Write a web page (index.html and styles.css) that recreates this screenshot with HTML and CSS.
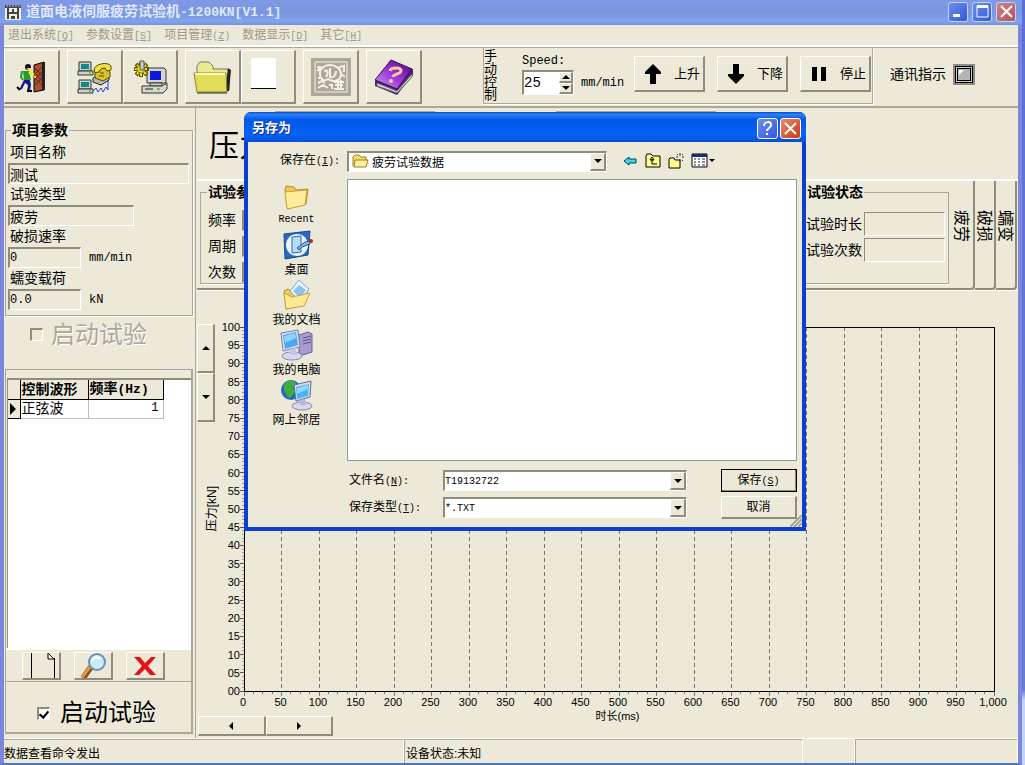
FILE: index.html
```html
<!DOCTYPE html>
<html lang="zh-CN">
<head>
  <meta charset="utf-8">
  <meta name="viewport" content="width=device-width, initial-scale=1.0">
  <title>道面电液伺服疲劳试验机</title>
  <link rel="stylesheet" href="styles.css">
</head>
<body>
  <div class="window">
    <header class="titlebar">
      <svg width="18" height="18" viewBox="0 0 18 18"><path d="M1 2h16v15H1z" fill="#eee"/><path d="M1 2h16v3H1zM3 5h2v11H3zM13 5h2v11h-2zM8 6h2v3H8zM5 9h8v2H5zM7 13h4v3H7z" fill="#444"/><path d="M2 3h14" stroke="#ccc" stroke-dasharray="2 1"/></svg>
      <h1>道面电液伺服疲劳试验机<span class="lat">-1200KN[V1.1]</span></h1>
      <button class="win-btn" aria-label="最小化"><svg width="17" height="17" viewBox="0 0 17 17"><path d="M3 11h7v3H3z" fill="#fff"/></svg></button>
      <button class="win-btn" aria-label="最大化"><svg width="17" height="17" viewBox="0 0 17 17"><path d="M3 3h11v11H3z" fill="none" stroke="#fff"/><path d="M3 2h11v3H3z" fill="#fff"/></svg></button>
      <button class="win-btn close" aria-label="关闭"><svg width="17" height="17" viewBox="0 0 17 17"><path d="M3 3l11 11M14 3L3 14" stroke="#fff" stroke-width="2"/></svg></button>
    </header>

    <nav class="menu">
      <a href="#">退出系统<span class="lat">[<u>Q</u>]</span></a>
      <a href="#">参数设置<span class="lat">[<u>S</u>]</span></a>
      <a href="#">项目管理<span class="lat">(<u>Z</u>)</span></a>
      <a href="#">数据显示<span class="lat">[<u>D</u>]</span></a>
      <a href="#">其它<span class="lat">[<u>H</u>]</span></a>
    </nav>

    <div class="toolbar">
      <div class="tools">
        <button class="tool" aria-label="退出">
          <svg width="36" height="36" viewBox="0 0 36 36"><path d="M20 6l10-3v28l-10 2z" fill="#a8502c" stroke="#000"/><path d="M28 3h3v28h-3z" fill="#222"/><path d="M21 9l7 8M21 14l7 8M21 19l7 7M28 8l-7 7M28 13l-7 7M28 19l-7 7" stroke="#5c2412"/><path d="M20 17h2v2h-2z" fill="#fd3"/><circle cx="14" cy="8" r="3" fill="#111"/><path d="M13 9h4v3h-3z" fill="#fc8"/><path d="M9 12h6l2 9h-7z" fill="#2a9a2e"/><path d="M8 12l-1 6 2 3" stroke="#2a9a2e" stroke-width="2" fill="none"/><path d="M15 13l5 3" stroke="#ee2" stroke-width="3"/><path d="M10 21h6l1 5-1 6h-3l1-6-3-2-3 6-3 1z" fill="#14148c"/><path d="M3 28l3 3M13 32h5" stroke="#000" stroke-width="2"/></svg>
        </button>
        <span class="gap"></span>
        <button class="tool" aria-label="通讯设置">
          <svg width="36" height="36" viewBox="0 0 36 36"><g fill="#cfd2c8" stroke="#333"><path d="M2 3h12v9H2zM2 21h12v9H2z"/><path d="M1 12h15v4H1zM1 30h15v4H1z"/></g><path d="M4 5h8v5H4zM4 23h8v5H4z" fill="#138a8a"/><path d="M12 14h2M12 32h2" stroke="#0b0"/><path d="M16 19l4-3h12v5l-8 5-8-3z" fill="#bbb" stroke="#222"/><path d="M18 14l5-5h6l4 4v5l-7 4-8-3z" fill="#d9c227" stroke="#554b00"/><path d="M17 11c0-6 14-9 17-4v4l-4 1-2-3c-3 0-5 1-6 4l-4 1z" fill="#f1df48" stroke="#554b00"/><path d="M23 14h4M22 17h5" stroke="#554b00"/><path d="M16 32l3-3 2 4 3-4 2 4 3-5 2 3V21" fill="none" stroke="#2343d6"/></svg>
        </button>
        <button class="tool" aria-label="系统设置">
          <svg width="36" height="36" viewBox="0 0 36 36"><g stroke="#333" fill="#d6d6ce"><path d="M15 9h17l2 2v13H15z"/><path d="M18 24h12v3H18z"/><path d="M10 27h20l5-3v6l-4 4H10z"/></g><path d="M18 12h11v9H18z" fill="#0b18d8"/><path d="M13 30h8" stroke="#222"/><path d="M25 30h3" stroke="#0a0"/><path d="M9 3v15M2 10h15M4 5l11 11M15 5L4 16" stroke="#5d5600" stroke-width="4"/><path d="M9 4v13M3 10h12M5 6l9 9M14 6l-9 9" stroke="#f2e13a" stroke-width="2"/><circle cx="9" cy="10" r="4" fill="#f2e13a" stroke="#8a8000"/><path d="M8 2h4v9H8z" fill="#ccc" stroke="#555"/></svg>
        </button>
        <span class="gap"></span>
        <button class="tool" aria-label="打开项目">
          <svg width="42" height="36" viewBox="0 0 42 36"><path d="M5 14V7l3-4h9l4 4v3h14l2 3v18H6z" fill="#ece98e" stroke="#776"/><path d="M36 9l3 2-2 21-4 1z" fill="#222"/><path d="M2 14h32l1 19H5z" fill="#e2dc58" stroke="#8a8430"/><path d="M3 15h30" stroke="#fffbc0" stroke-width="2"/><path d="M5 34h30" stroke="#222"/></svg>
        </button>
        <button class="tool" aria-label="新建">
          <svg width="36" height="40" viewBox="0 0 36 40"><path d="M1 1h25v30H1z" fill="#fff"/><path d="M1 31h25v1H1z"/></svg>
        </button>
        <span class="gap"></span>
        <button class="tool" aria-label="停用" disabled>
          <svg width="42" height="42" viewBox="0 0 42 42"><path d="M1 2h40v38H1z" fill="#aca899"/><path d="M5 6h32v30H5z" fill="none" stroke="#f4f1e4"/><path d="M10 18c-1-5 4-9 10-9s11 4 11 9c0 8-9 8-13 5-4 3-8 0-8-5zM14 15c5-2 4 3 2 6M20 12v9c4 1 6-2 6-6M29 11l5-1v6M7 11h4M7 15l3-3M24 26h10M25 29h8M28 24v9M24 33h10M31 24v9M8 27l4-2 3 2M8 32l5-3 5 3M31 18l4 3M8 22h3M19 29h3v4" fill="none" stroke="#f4f1e4" stroke-width="2"/></svg>
        </button>
        <span class="gap"></span>
        <button class="tool" aria-label="帮助">
          <svg width="42" height="40" viewBox="0 0 42 40"><defs><linearGradient id="book" x1="0" y1="1" x2="1" y2="0"><stop offset="0" stop-color="#c8a0ee"/><stop offset=".45" stop-color="#a23ae0"/><stop offset="1" stop-color="#4a0a78"/></linearGradient></defs><path d="M2 24v5l22 9 16-20v-6z" fill="#4b2376"/><path d="M4 26l20 8 15-17v3L24 36 4 29z" fill="#dcd8dc" stroke="#666"/><path d="M2 23L18 3l21 9-15 20z" fill="url(#book)" stroke="#35095a"/><path d="M17 14c1-4 12-4 11 0-1 4-7 2-8 6" fill="none" stroke="#ffc9a0" stroke-width="3"/><circle cx="18" cy="24" r="2" fill="#ffc9a0"/></svg>
        </button>
      </div>

      <section class="manual">
        <h2>手动控制</h2>
        <div class="speed">
          <label class="mono" for="speed">Speed:</label>
          <div class="speed-row">
            <div class="spin">
              <input class="mono" id="speed" type="text" value="25">
              <div class="spin-btns">
                <button aria-label="增加"><i class="tri up"></i></button>
                <button aria-label="减少"><i class="tri down"></i></button>
              </div>
            </div>
            <span class="mono">mm/min</span>
          </div>
        </div>
        <button class="move"><svg width="16" height="20" viewBox="0 0 16 20"><path d="M8 0l8 8v2h-5v10H5V10H0V8z"/></svg>上升</button>
        <button class="move"><svg width="16" height="20" viewBox="0 0 16 20"><path d="M8 20l8-8v-2h-5V0H5v10H0v2z"/></svg>下降</button>
        <button class="move"><svg width="16" height="20" viewBox="0 0 16 20"><path d="M1 3h5v14H1zM10 3h5v14h-5z"/></svg>停止</button>
      </section>

      <div class="signal">通讯指示
        <svg width="22" height="21" viewBox="0 0 22 21"><path d="M0 0h22v21H0z" fill="#8d8d85"/><path d="M2 2h18v17H2z"/><path d="M3 3h16v15H3z" fill="#ccc"/><path d="M4 4h14v13H4z"/><path d="M5 5h12v11H5z" fill="#b5b5b5"/><path d="M6 11V6h5z" fill="#fff"/></svg>
      </div>
    </div>

    <main class="content">
      <aside class="side">
        <fieldset class="box params">
          <legend>项目参数</legend>
          <label for="p-name">项目名称</label>
          <div class="row"><input class="wide" id="p-name" value="测试" readonly></div>
          <label for="p-type">试验类型</label>
          <div class="row"><input class="mid" id="p-type" value="疲劳" readonly></div>
          <label for="p-rate">破损速率</label>
          <div class="row"><input class="short mono" id="p-rate" value="0" readonly><span class="mono">mm/min</span></div>
          <label for="p-load">蠕变载荷</label>
          <div class="row"><input class="short mono" id="p-load" value="0.0" readonly><span class="mono">kN</span></div>
        </fieldset>

        <label class="start off"><input type="checkbox" disabled>启动试验</label>

        <section class="waves">
          <div class="grid">
            <table>
              <thead>
                <tr><th class="mark"></th><th class="name">控制波形</th><th class="freq">频率<span class="lat">(Hz)</span></th></tr>
              </thead>
              <tbody>
                <tr><td class="mark"><i class="tri right"></i></td><td>正弦波</td><td class="num mono">1</td></tr>
              </tbody>
            </table>
          </div>
          <div class="wave-btns">
            <button aria-label="新建"><svg width="32" height="26" viewBox="0 0 32 26"><path d="M6 0h1v26H6zM29 5h1v21h-1z"/><path d="M23 0l6 6h-6z" fill="#fff" stroke="#000"/></svg></button>
            <button aria-label="查看"><svg width="32" height="26" viewBox="0 0 32 26"><path d="M14 14L6 25" stroke="#8a5520" stroke-width="6"/><path d="M13 14L5 24" stroke="#e39a48" stroke-width="3"/><circle cx="20" cy="9" r="8" fill="#c9ecfa" stroke="#6f8fae" stroke-width="2"/><path d="M15 8c1-4 6-5 8-2" stroke="#fff" stroke-width="2" fill="none"/></svg></button>
            <button aria-label="删除"><svg width="32" height="26" viewBox="0 0 32 26"><path d="M5 4h6l5 6 6-6h5l-8 9 8 9h-6l-5-6-6 6H5l8-9z" fill="#e0141a"/></svg></button>
          </div>
          <label class="start"><input type="checkbox" checked>启动试验</label>
        </section>
      </aside>

      <section class="view">
        <div class="readout">
          <h2>压力</h2>
          <output></output>
          <output></output>
        </div>

        <div class="tabs">
          <div class="tab-page">
            <fieldset class="box test-params">
              <legend>试验参数</legend>
              <div class="row"><label for="t-freq">频率</label><input id="t-freq" readonly></div>
              <div class="row"><label for="t-period">周期</label><input id="t-period" readonly></div>
              <div class="row"><label for="t-count">次数</label><input id="t-count" readonly></div>
            </fieldset>
            <fieldset class="box test-state">
              <legend>试验状态</legend>
              <div class="row"><label for="s-time">试验时长</label><input id="s-time" readonly></div>
              <div class="row"><label for="s-count">试验次数</label><input id="s-count" readonly></div>
            </fieldset>
          </div>
          <button class="tab active">疲劳</button>
          <button class="tab">破损</button>
          <button class="tab">蠕变</button>
        </div>

        <div class="chart">
          <div class="y-side">
            <div class="v-scroll">
              <button aria-label="上移"><i class="tri up"></i></button>
              <button aria-label="下移"><i class="tri down"></i></button>
            </div>
            <span class="y-title">压力[kN]</span>
          </div>
          <svg id="plot" class="plot" viewBox="0 0 797 398"></svg>
          <div class="x-side">
            <div class="h-scroll">
              <button aria-label="左移"><i class="tri left"></i></button>
              <button aria-label="右移"><i class="tri right"></i></button>
            </div>
            <span class="x-title">时长(ms)</span>
          </div>
        </div>
      </section>
    </main>

    <footer class="status">
      <span class="s1">数据查看命令发出</span>
      <span class="s2">设备状态:未知</span>
      <span class="s3"></span>
      <span class="s4"></span>
    </footer>
  </div>

  <div class="dialog" role="dialog" aria-labelledby="dlg-title">
    <header>
      <h2 id="dlg-title">另存为</h2>
      <button class="win-btn help" aria-label="帮助"><svg width="19" height="19" viewBox="0 0 19 19"><path d="M6 7c0-5 8-5 7-1 0 3-4 3-4 6" fill="none" stroke="#fff" stroke-width="2"/><path d="M8 14h2v2H8z" fill="#fff"/></svg></button>
      <button class="win-btn close" aria-label="关闭"><svg width="19" height="19" viewBox="0 0 19 19"><path d="M4 4l11 11M15 4L4 15" stroke="#fff" stroke-width="2"/></svg></button>
    </header>
    <div class="dlg-body">
      <div class="look">
        <label for="folder">保存在<span class="lat">(<u>I</u>):</span></label>
        <div class="combo">
          <svg width="17" height="15" viewBox="0 0 17 15"><path d="M1 12V3l2-2h4l2 2h5v3" fill="#f5dd75" stroke="#a07c16"/><path d="M3 6h13l-2 7H2z" fill="#fdf09c" stroke="#a07c16"/></svg>
          <select id="folder"><option>疲劳试验数据</option></select>
          <span class="arrow"><i class="tri down"></i></span>
        </div>
        <div class="look-btns">
          <button aria-label="后退"><svg width="16" height="16" viewBox="0 0 16 16"><path d="M2 8l5-4v2h7v4H7v2z" fill="#3fd8dc" stroke="#046"/></svg></button>
          <button aria-label="向上"><svg width="16" height="16" viewBox="0 0 16 16"><path d="M1 14V3l1-2h4l2 2h7v11z" fill="#ffff8c" stroke="#000"/><path d="M5 7l2-3 2 3zM7 6v5h5" stroke="#000" fill="none"/></svg></button>
          <button aria-label="新建文件夹"><svg width="16" height="16" viewBox="0 0 16 16"><path d="M1 15V6l1-1h4l1 2h5v8z" fill="#ffff8c" stroke="#000"/><path d="M12 0v3M12 6v3M8 4h2M14 4h2M9 1l1 1M15 1l-1 1M15 8l-1-1" stroke="#333"/></svg></button>
          <button aria-label="视图"><svg width="24" height="16" viewBox="0 0 24 16"><path d="M1 1h15v13H1z" fill="#fff" stroke="#000"/><path d="M1 1h15v3H1z" fill="#1c2a7a"/><path d="M3 6h2M7 6h2M11 6h3M3 9h2M7 9h2M11 9h3M3 12h2M7 12h2M11 12h3" stroke="#222" stroke-width="1"/><path d="M18 6h6l-3 3z"/></svg></button>
        </div>
      </div>

      <div class="places">
        <a href="#">
          <svg width="32" height="28" viewBox="0 0 32 28"><path d="M5 7l1-4 8 1 2 3 12-1-2 15-18 5z" fill="#eec95a" stroke="#b48a2c"/><path d="M5 9l22-2-2 15-18 4z" fill="#fdec9a" stroke="#caa23c"/></svg>
          <span class="lat">Recent</span></a>
        <a href="#">
          <svg width="32" height="32" viewBox="0 0 32 32"><path d="M3 5l26-3-2 24-23 4z" fill="#2a69be" stroke="#184a90"/><ellipse cx="16" cy="16" rx="11" ry="11" fill="#eaf5f8"/><path d="M11 8l9-1v16l-9 1z" fill="#b8dcf4" stroke="#2a69be"/><path d="M16 19l8-6 5-1v3l-8 3-3 3z" fill="#86b8ea" stroke="#2452a0"/><circle cx="30" cy="12" r="2" fill="#b22"/></svg>
          桌面</a>
        <a href="#">
          <svg width="32" height="32" viewBox="0 0 32 32"><path d="M4 12l4-2 3 2 16 1-3 13-18 4z" fill="#efc859" stroke="#b48a2c"/><path d="M10 12l9-11 10 9-9 13z" fill="#e8f5ff" stroke="#7ba9d4"/><path d="M13 12l6-6 7 5-6 8z" fill="#8cc3f0"/><path d="M4 14l8 4 18-4-6 13-18 3z" fill="#fdea90" stroke="#caa23c"/></svg>
          我的文档</a>
        <a href="#">
          <svg width="34" height="32" viewBox="0 0 34 32"><path d="M20 6l9-3 4 2v18l-9 3-4-2z" fill="#a79bd2" stroke="#6a6094"/><path d="M24 9l8-2M24 12l8-2M24 15l8-2" stroke="#5d5388"/><path d="M2 4l17-3 2 17-17 4z" fill="#d8dcf0" stroke="#7c80aa"/><path d="M4 6l13-3 2 13-13 4z" fill="#4aa8ee"/><path d="M5 7l11-3 1 5-11 5z" fill="#8fd2fa"/><ellipse cx="13" cy="27" rx="10" ry="4" fill="#d9d7ee" stroke="#8a86b0"/><path d="M11 20l6-1 1 7h-7z" fill="#c8c4e6"/></svg>
          我的电脑</a>
        <a href="#">
          <svg width="34" height="32" viewBox="0 0 34 32"><circle cx="12" cy="11" r="10" fill="#2467c4"/><path d="M5 5c4-5 10-4 12-1l-3 5 2 4-5 6c-4-1-3-5-6-7z" fill="#3fae3c"/><path d="M15 6l17-4-1 16-14 4z" fill="#d8dcf0" stroke="#5c6c9c"/><path d="M17 8l13-3-1 12-11 3z" fill="#4ab4f2"/><path d="M18 9l11-3v4l-11 5z" fill="#8fd8fa"/><ellipse cx="23" cy="27" rx="10" ry="4" fill="#d9d7ee" stroke="#8a86b0"/><path d="M21 21l5-1 1 6h-6z" fill="#b8b4dc"/></svg>
          网上邻居</a>
      </div>

      <div class="files"></div>

      <div class="save">
        <label for="fname">文件名<span class="lat">(<u>N</u>):</span></label>
        <div class="combo">
          <input class="lat" id="fname" type="text" value="T19132722">
          <button class="arrow" aria-label="展开"><i class="tri down"></i></button>
        </div>
        <button class="btn default">保存<span class="lat">(<u>S</u>)</span></button>
        <label for="ftype">保存类型<span class="lat">(<u>T</u>):</span></label>
        <div class="combo">
          <select class="lat" id="ftype"><option>*.TXT</option></select>
          <span class="arrow"><i class="tri down"></i></span>
        </div>
        <button class="btn">取消</button>
      </div>
    </div>
    <svg class="grip" width="12" height="12" viewBox="0 0 12 12"><path d="M0 12L12 0M4 12l8-8M8 12l4-4" stroke="#aca899" stroke-width="2"/></svg>
  </div>

  <script src="chart.js"></script>
</body>
</html>
```
FILE: styles.css
```css
* {
  box-sizing: border-box;
}

body {
  margin: 0;
  min-height: 100vh;
  display: flex;
  background: linear-gradient(#5a70d8 0, #6a7cd0 690px, #c4d4f4 700px);
  font-family: "Liberation Sans", "Noto Sans CJK SC", sans-serif;
  font-size: 14px;
  line-height: 20px;
  color: #000;
}

h1, h2 {
  margin: 0;
}

button, input, select {
  font: inherit;
  color: inherit;
  margin: 0;
  padding: 0;
  border-radius: 0;
}

svg {
  display: block;
  flex: none;
}

a {
  color: inherit;
  text-decoration: none;
}

.mono {
  font-family: "Liberation Mono", "Noto Sans CJK SC", monospace;
  font-size: 12px;
}

/* latin letters beside chinese text */
.lat {
  font-family: "Liberation Mono", "Noto Sans CJK SC", monospace;
  font-size: 10px;
}

.tri {
  display: block;
  width: 0;
  height: 0;
  border: 4px solid transparent;
}

.tri.up { border-top: 0; border-bottom-color: #000; }
.tri.down { border-bottom: 0; border-top-color: #000; }
.tri.left { border-left: 0; border-right-color: #000; }
.tri.right { border-right: 0; border-left-color: #000; }

.window {
  flex: 1;
  min-width: 0;
  margin-right: 3px;
  display: flex;
  flex-direction: column;
  background: #ece9d8;
  border: solid #7b86dc;
  border-width: 0 4px 2px 4px;
  border-bottom-color: #4a78b8;
}

.titlebar {
  display: flex;
  align-items: center;
  gap: 4px;
  height: 25px;
  margin: 0 -4px;
  padding: 0 6px 2px 4px;
  background: linear-gradient(#8099e4 0, #7a96df 50%, #80a4ec 85%, #7890dc 100%);
}

.titlebar h1 {
  flex: 1;
  font-size: 14px;
  font-weight: bold;
  color: #dfe9fb;
}

.titlebar h1 .lat {
  font-size: 13px;
}

.win-btn {
  display: flex;
  align-items: center;
  justify-content: center;
  width: 20px;
  height: 20px;
  border: 1px solid #c5d3f6;
  border-radius: 3px;
  background: linear-gradient(135deg, #6d8ff0, #3159d4);
}

.win-btn.close {
  background: linear-gradient(135deg, #cf8288, #b5525c);
}

.menu {
  display: flex;
  gap: 12px;
  height: 22px;
  padding: 0 4px;
  font-size: 12px;
  color: #9d9a8b;
  border-bottom: 2px solid #fff;
}

.toolbar {
  display: flex;
  border-top: 1px solid #aca899;
  border-bottom: 2px solid #aca899;
  height: 61px;
}

.tools {
  display: flex;
  width: 479px;
  padding-top: 2px;
}

.tools .gap {
  width: 7px;
}

.tool {
  display: flex;
  align-items: center;
  justify-content: center;
  width: 56px;
  height: 54px;
}

.tool + .tool {
  width: 55px;
}

.tool, .move, .btn, .wave-btns button, .v-scroll button, .h-scroll button, .spin button, .arrow {
  background: #ece9d8;
  border: solid;
  border-width: 1px 2px 2px 1px;
  border-color: #fff #8f8c7e #8f8c7e #fff;
}

.manual {
  display: flex;
  width: 390px;
  height: 56px;
  border: 1px solid #aca899;
  border-top: 0;
  box-shadow: 1px 1px #fff;
}

.manual h2 {
  width: 14px;
  font-size: 13px;
  line-height: 13px;
  font-weight: normal;
  padding-top: 1px;
}

.speed {
  display: flex;
  flex-direction: column;
  width: 112px;
  margin: 4px 0 0 24px;
}

.speed label {
  line-height: 18px;
}

.speed-row {
  display: flex;
  align-items: center;
  gap: 7px;
}

.spin {
  display: flex;
  width: 52px;
  height: 25px;
  background: #fff;
  border: solid;
  border-width: 2px 1px 1px 2px;
  border-color: #8f8c7e #fff #fff #8f8c7e;
}

.spin input {
  flex: 1;
  min-width: 0;
  border: 0;
  font-size: 14px;
}

.spin-btns {
  width: 14px;
  display: flex;
  flex-direction: column;
}

.spin button {
  flex: 1;
  display: flex;
  align-items: center;
  justify-content: center;
}

.move {
  display: flex;
  align-items: center;
  justify-content: space-between;
  width: 71px;
  height: 36px;
  margin: 8px 12px 0 0;
  padding: 0 3px 0 10px;
  font-size: 13px;
}

.move:last-child {
  margin-right: 0;
}

.signal {
  display: flex;
  align-items: center;
  gap: 7px;
  padding: 0 0 6px 17px;
}

.content {
  flex: 1;
  display: flex;
}

.side {
  display: flex;
  flex-direction: column;
  width: 192px;
  padding: 13px 2px 4px 1px;
  border-right: 1px solid #aca899;
}

.box {
  margin: 0;
  min-width: 0;
  border: 1px solid #aca899;
  box-shadow: 1px 1px #fff;
}

.box legend {
  font-weight: bold;
  line-height: 18px;
  padding: 0 1px;
}

.params {
  padding: 3px 3px 5px 2px;
}

.params legend {
  margin-left: 3px;
}

.params label {
  display: block;
  line-height: 21px;
  padding-left: 2px;
}

.row {
  display: flex;
  align-items: center;
  gap: 8px;
}

.row input {
  height: 21px;
  min-width: 0;
  background: #ece9d8;
  border: solid;
  border-width: 2px 1px 1px 2px;
  border-color: #8f8c7e #fff #fff #8f8c7e;
}

.params .wide { width: 100%; }
.params .mid { width: 126px; }
.params .short { width: 73px; }

.start {
  display: flex;
  align-items: center;
  gap: 8px;
  height: 52px;
  padding-left: 31px;
  font-size: 24px;
  line-height: 30px;
}

.start input {
  appearance: none;
  width: 13px;
  height: 13px;
  background: #fff;
  border: solid;
  border-width: 2px 1px 1px 2px;
  border-color: #8f8c7e #fff #fff #8f8c7e;
}

.start input:checked::after {
  content: "";
  display: block;
  width: 4px;
  height: 7px;
  margin: 0 auto;
  border: solid #000;
  border-width: 0 2px 2px 0;
  transform: rotate(40deg);
}

.start.off {
  height: 53px;
  padding: 0 0 16px 25px;
  color: #aca899;
  text-shadow: 1px 1px #fff;
}

.start.off input {
  background: #ece9d8;
}

.waves {
  flex: 1;
  display: flex;
  flex-direction: column;
  padding-top: 8px;
  border: solid #aca899;
  border-width: 1px 2px 2px 1px;
}

.grid {
  flex: 1;
  margin: 0 0 0 1px;
  background: #fff;
  border: solid #8f8c7e;
  border-width: 2px 0 0 1px;
}

.grid table {
  border-collapse: collapse;
  line-height: 17px;
}

.grid th, .grid td {
  height: 19px;
  padding: 0 1px;
  text-align: left;
  white-space: nowrap;
  border-right: 1px solid #c0bdb0;
  border-bottom: 1px solid #c0bdb0;
}

.grid th, .grid .mark {
  background: #ece9d8;
  border-right-color: #000;
  border-bottom-color: #000;
}

.grid th .lat {
  font-size: 13px;
}

.grid .mark { width: 12px; padding: 0 2px; }
.grid .name { width: 68px; }
.grid .freq { width: 75px; }

.grid .mark .tri {
  border-width: 6px 0 6px 6px;
}

.grid td.num {
  text-align: right;
  padding-right: 4px;
}

.wave-btns {
  display: flex;
  gap: 13px;
  padding: 2px 0 1px 16px;
  border-top: 2px solid #fff;
  border-bottom: 1px solid #aca899;
}

.wave-btns button {
  width: 39px;
  height: 28px;
  display: flex;
  align-items: center;
  justify-content: center;
  overflow: hidden;
}

.waves .start {
  gap: 10px;
  height: 50px;
  padding-top: 12px;
}

.view {
  flex: 1;
  min-width: 0;
  display: flex;
  flex-direction: column;
  padding-left: 1px;
}

.readout {
  display: flex;
  align-items: flex-start;
  height: 73px;
  padding: 3px 12px;
  border-bottom: 2px solid #fff;
}

.readout h2 {
  font-size: 30px;
  line-height: 70px;
  font-weight: normal;
  width: 66px;
}

.readout output {
  width: 160px;
  height: 40px;
  margin-right: 121px;
  border-top: 1px solid #aca899;
}

.tabs {
  display: flex;
  height: 109px;
  padding-right: 1px;
}

.tab-page {
  flex: 1;
  display: flex;
  gap: 150px;
  padding: 2px 0 4px 3px;
  border-bottom: 2px solid #8f8c7e;
}

.tab-page .row {
  gap: 2px;
  height: 26px;
}

.test-params {
  flex: 1;
  padding: 6px 7px;
}

.test-params legend {
  margin-left: -1px;
}

.test-params .row {
  gap: 6px;
}

.test-state {
  width: 150px;
  padding: 10px 3px 0 6px;
}

.test-state .row input {
  flex: 1;
  height: 24px;
  border-width: 1px;
}

.tab {
  width: 21px;
  border: solid #8f8c7e;
  border-width: 0 2px 2px 0;
  border-radius: 0 0 4px 0;
  background: #ece9d8;
  writing-mode: vertical-rl;
  text-orientation: sideways;
  font-size: 16px;
  line-height: 19px;
  padding-bottom: 16px;
}

.tab.active {
  width: 26px;
}

.chart {
  flex: 1;
  display: grid;
  grid-template-columns: 24px 1fr;
  grid-template-rows: auto 1fr;
  border-top: 1px solid #fff;
  font-size: 11px;
  line-height: 14px;
}

.y-side {
  padding-top: 33px;
}

.v-scroll {
  display: flex;
  flex-direction: column;
  width: 18px;
}

.v-scroll button {
  display: flex;
  align-items: center;
  justify-content: center;
  height: 49px;
}

.y-title {
  display: block;
  width: 18px;
  margin: 64px 0 0 6px;
  font-size: 12px;
  line-height: 18px;
  writing-mode: vertical-rl;
  text-orientation: sideways;
  transform: rotate(180deg);
}

.plot {
  width: 100%;
  margin-top: 19px;
}

.plot text {
  font-size: 11px;
}

.x-side {
  grid-column: 1 / 3;
  display: flex;
}

.h-scroll {
  display: flex;
  margin: 8px 0 2px 1px;
  width: 135px;
}

.h-scroll button {
  flex: 1;
  height: 20px;
  display: flex;
  align-items: center;
  justify-content: center;
}

.x-title {
  flex: 1;
  padding: 1px 116px 0 0;
  text-align: center;
}

.status {
  display: flex;
  height: 25px;
  border-top: 1px solid #fff;
  font-size: 12px;
  line-height: 28px;
}

.status span {
  border: solid;
  border-width: 1px 1px 0 0;
  border-color: #aca899 #fff;
}

.status .s1 { width: 400px; }
.status .s2 { width: 399px; padding-left: 1px; border-left: 1px solid #aca899; }
.status .s3 { width: 52px; border-top-color: transparent; }
.status .s4 { flex: 1; border-left: 1px solid #aca899; }

.dialog {
  position: absolute;
  left: 244px;
  top: 112px;
  width: 562px;
  background: #ece9d8;
  border: 4px solid #0a3fd0;
  border-top: 0;
  border-radius: 7px 7px 0 0;
  font-size: 12px;
}

.dialog header {
  display: flex;
  align-items: center;
  gap: 2px;
  height: 30px;
  margin: 0 -4px;
  padding: 2px 5px 0 8px;
  border-radius: 7px 7px 0 0;
  background: linear-gradient(#0a48c4 0, #2a82fa 8%, #0458e6 25%, #0562f8 75%, #0350d8 100%);
}

.dialog h2 {
  flex: 1;
  font-size: 13px;
  color: #fff;
  text-shadow: 1px 1px #0a2a80;
}

.dialog .win-btn {
  width: 21px;
  height: 21px;
  border-color: #fff;
}

.dialog .win-btn.close {
  background: linear-gradient(135deg, #f0876a, #c93a14);
}

.dlg-body {
  display: grid;
  grid-template-columns: 99px 1fr;
  padding: 8px 5px 8px 0;
}

.look {
  grid-column: 1 / 3;
  display: flex;
  align-items: center;
  margin-bottom: 7px;
}

.look label {
  width: 99px;
  padding-left: 32px;
}

.combo {
  display: flex;
  align-items: center;
  height: 21px;
  background: #fff;
  border: solid;
  border-width: 2px 1px 1px 2px;
  border-color: #8f8c7e #fff #fff #8f8c7e;
}

.look .combo {
  width: 260px;
  padding-left: 3px;
}

.combo select, .combo input {
  appearance: none;
  flex: 1;
  min-width: 0;
  height: 100%;
  border: 0;
  background: none;
  outline: none;
}

.look .combo select {
  padding-left: 3px;
}

.arrow {
  display: flex;
  align-items: center;
  justify-content: center;
  width: 16px;
  height: 100%;
}

.look-btns {
  display: flex;
  gap: 7px;
  padding-left: 15px;
}

.look-btns button {
  border: 0;
  background: none;
}

.places {
  display: flex;
  flex-direction: column;
  align-items: center;
  padding: 4px 2px 0 0;
}

.places a {
  display: flex;
  flex-direction: column;
  align-items: center;
  line-height: 18px;
}

.places .lat {
  line-height: 18px;
}

.files {
  height: 282px;
  background: #fff;
  border: 1px solid #8d9aa5;
}

.save {
  grid-column: 2;
  display: grid;
  grid-template-columns: 96px 244px 1fr;
  align-items: center;
  gap: 4px 0;
  padding-top: 8px;
}

.save label {
  padding-left: 2px;
}

.btn {
  width: 76px;
  height: 23px;
  justify-self: end;
}

.btn.default {
  outline: 1px solid #000;
  outline-offset: -1px;
}

.grip {
  position: absolute;
  right: 0;
  bottom: 0;
}
```
FILE: chart.js
```javascript
const plot = document.getElementById('plot');
const left = 23, right = 773, top0 = 17, bottom = 381;

function line(x1, y1, x2, y2, color, dash) {
  return `<line x1="${x1}" y1="${y1}" x2="${x2}" y2="${y2}" stroke="${color}" stroke-dasharray="${dash || 'none'}" shape-rendering="crispEdges"/>`;
}

function label(x, y, anchor, text) {
  return `<text x="${x}" y="${y}" text-anchor="${anchor}">${text}</text>`;
}

let out = '';

// time axis, 0 to 1000 ms
for (let i = 0; i <= 80; i++) {
  const x = left + (right - left) * i / 80;
  out += line(x, bottom, x, bottom + (i % 4 ? 3 : 5), '#777');
  if (i % 4 === 0) {
    const ms = i / 4 * 50;
    if (ms > 0 && ms < 1000) {
      out += line(x, top0, x, bottom, '#77756a', '4 3');
    }
    out += label(x - 1, bottom + 15, 'middle', ms.toLocaleString('en-US'));
  }
}

// load axis, 0 to 100 kN
for (let i = 0; i <= 100; i++) {
  const y = bottom - (bottom - top0) * i / 100;
  if (i % 5 === 0) {
    out += line(left - 4, y, left, y, '#555');
    out += label(left - 4, y + 4, 'end', String(i).padStart(2, '0'));
  } else {
    out += line(left - 2, y, left, y, '#999');
  }
}

out += `<rect x="${left}" y="${top0}" width="${right - left}" height="${bottom - top0}" fill="none" stroke="#000" shape-rendering="crispEdges"/>`;
plot.innerHTML = out;
```
